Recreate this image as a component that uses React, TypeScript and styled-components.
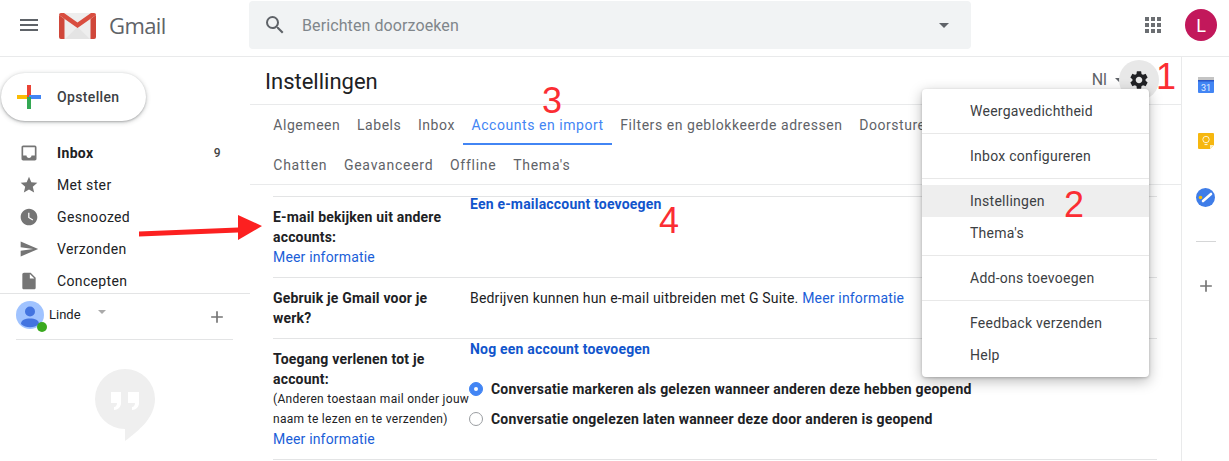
import React from "react";
import styled, { createGlobalStyle } from "styled-components";
import { MdAdd, MdInbox, MdInsertDriveFile, MdMenu, MdSearch, MdSend, MdSettings, MdStar, MdWatchLater } from "react-icons/md";

const Global = createGlobalStyle`
  html, body { margin: 0; padding: 0; background: #fff; }
  body { font-family: Roboto, "Liberation Sans", sans-serif; font-size: 14px; color: #202124; }
  * { box-sizing: border-box; }
`;

const Page = styled.div`
  position: relative;
  width: 1229px;
  height: 461px;
  overflow: hidden;
  display: flex;
  flex-direction: column;
`;

const Header = styled.header`
  height: 57px;
  flex: none;
  display: flex;
  align-items: flex-start;
  border-bottom: 1px solid #e9eaeb;
`;
const MenuBtn = styled.div`
  width: 59px;
  height: 50px;
  flex: none;
  padding-left: 17px;
  display: flex;
  align-items: center;
  color: #5f6368;
  font-size: 24px;
`;
const Brand = styled.div`
  width: 190px;
  height: 50px;
  flex: none;
  display: flex;
  align-items: center;
  gap: 13px;
`;
const BrandName = styled.span`
  font-family: "Open Sans", sans-serif;
  font-size: 22px;
  letter-spacing: -0.6px;
  color: #5f6368;
`;
const Search = styled.div`
  width: 722px;
  height: 48px;
  margin-top: 1px;
  flex: none;
  background: #f1f3f4;
  border-radius: 4px;
  display: flex;
  align-items: center;
  padding: 0 22px 0 14px;
  color: #5f6368;
  font-size: 24px;
`;
const Placeholder = styled.span`
  flex: 1;
  margin-left: 15px;
  font-size: 16px;
  letter-spacing: 0.1px;
  color: #80868b;
`;
const Caret = styled.i<{ $c?: string; $s?: number }>`
  display: inline-block;
  flex: none;
  width: 0;
  height: 0;
  border-left: ${(p) => p.$s ?? 5}px solid transparent;
  border-right: ${(p) => p.$s ?? 5}px solid transparent;
  border-top: ${(p) => p.$s ?? 5}px solid ${(p) => p.$c ?? "#5f6368"};
`;
const HeaderRight = styled.div`
  flex: 1;
  height: 50px;
  display: flex;
  align-items: center;
  justify-content: flex-end;
  gap: 24px;
  padding-right: 12px;
`;
const Avatar = styled.div`
  width: 32px;
  height: 32px;
  border-radius: 50%;
  background: #c2185b;
  color: #fff;
  font-size: 18px;
  display: flex;
  align-items: center;
  justify-content: center;
`;

const Body = styled.div`
  flex: 1;
  min-height: 0;
  display: flex;
`;
const Sidebar = styled.aside`
  width: 250px;
  flex: none;
  display: flex;
  flex-direction: column;
`;
const Compose = styled.div`
  width: 145px;
  height: 48px;
  margin: 16px 0 16px 1px;
  flex: none;
  border-radius: 24px;
  background: #fff;
  box-shadow: 0 1px 2px rgba(60, 64, 67, 0.3), 0 1px 4px 1px rgba(60, 64, 67, 0.2);
  display: flex;
  align-items: center;
  gap: 16px;
  padding-left: 16px;
  font-weight: 500;
  letter-spacing: 0.35px;
  color: #3c4043;
`;
const Nav = styled.nav`
  height: 157px;
  flex: none;
  overflow: hidden;
  border-bottom: 1px solid #e3e4e5;
`;
const NavRow = styled.div<{ $bold?: boolean }>`
  height: 32px;
  display: flex;
  align-items: center;
  padding: 0 29px 0 19px;
  gap: 18px;
  font-weight: ${(p) => (p.$bold ? 700 : 400)};
  letter-spacing: 0.35px;
  color: #202124;
  svg { color: #757575; font-size: 20px; flex: none; }
`;
const NavLabel = styled.span`
  flex: 1;
`;
const Count = styled.span`
  font-size: 12px;
  font-weight: 500;
  color: #444;
`;
const Account = styled.div`
  height: 46px;
  margin: 0 16px;
  flex: none;
  width: 217px;
  border-bottom: 1px solid #e3e4e5;
  display: flex;
  align-items: flex-start;
  padding-top: 7px;
`;
const AccountName = styled.span`
  margin: 6px 0 0 1px;
  font-size: 13px;
  width: 49px;
  color: #202124;
`;
const AccountCaret = styled.div`
  margin-top: 4px;
  flex: 1;
  display: flex;
  height: 14px;
  align-items: center;
`;
const AccountPlus = styled.div`
  margin: 6px 6px 0 0;
  font-size: 20px;
  color: #757575;
  display: flex;
`;
const HangoutWrap = styled.div`
  margin: 28px 0 0 94px;
`;

const Main = styled.main`
  width: 931px;
  flex: none;
  min-width: 0;
`;
const TitleBar = styled.div`
  height: 48px;
  display: flex;
  align-items: center;
  justify-content: space-between;
  border-bottom: 1px solid #e9eaeb;
  padding: 0 22px 2px 15px;
`;
const Title = styled.h1`
  margin: 4px 0 0;
  font-size: 22px;
  font-weight: 400;
  color: #202124;
`;
const TitleTools = styled.div`
  display: flex;
  align-items: center;
  color: #5f6368;
  font-size: 16px;
`;
const GearCircle = styled.div`
  width: 40px;
  height: 40px;
  margin-left: -4px;
  border-radius: 50%;
  background: #e8e8e8;
  display: flex;
  align-items: center;
  justify-content: center;
  color: #202124;
  font-size: 22px;
`;
const LangLabel = styled.span`
  margin-right: 8px;
`;
const TabRow = styled.div<{ $line?: boolean }>`
  height: 40px;
  padding-left: 15px;
  display: flex;
  overflow: hidden;
  white-space: nowrap;
  letter-spacing: ${(p) => (p.$line ? "0.75px" : "0.55px")};
  ${(p) => (p.$line ? "border-bottom: 1px solid #e9eaeb;" : "")}
`;
const Tab = styled.div<{ $active?: boolean }>`
  height: 40px;
  padding: 2px 8.300px 0;
  display: flex;
  align-items: center;
  color: ${(p) => (p.$active ? "#4285f4" : "#5f6368")};
  font-weight: 400;
  border-bottom: 2px solid ${(p) => (p.$active ? "#4285f4" : "transparent")};
`;
const Settings = styled.div`
  margin: 11px 24px 0 23px;
  border-bottom: 1px solid #e3e4e5;
`;
const SetRow = styled.section`
  display: grid;
  grid-template-columns: 197px 1fr;
  border-top: 1px solid #e3e4e5;
  height: ${(p: { $h: number }) => p.$h}px;
`;
const Label = styled.div`
  padding-top: 10px;
  line-height: 20px;
  letter-spacing: 0.18px;
`;
const LabelTitle = styled.div`
  font-weight: 700;
  color: #202124;
  padding-right: 12px;
`;
const Note = styled.div`
  font-size: 12px;
  letter-spacing: 0.3px;
  white-space: nowrap;
`;
const Link = styled.a`
  display: block;
  color: #1a5ed8;
  letter-spacing: 0.17px;
`;
const StrongLink = styled.a<{ $tight?: boolean }>`
  display: block;
  font-weight: 700;
  color: #1155cc;
  letter-spacing: 0.19px;
  line-height: ${(p) => (p.$tight ? "14px" : "20px")};
`;
const Value = styled.div<{ $top: number }>`
  padding-top: ${(p) => p.$top}px;
  line-height: 20px;
  letter-spacing: 0.18px;
  white-space: nowrap;
  color: #202124;
`;
const InlineLink = styled.a`
  color: #1a5ed8;
`;
const Radios = styled.div`
  margin-top: 15px;
`;
const RadioRow = styled.div`
  height: 30px;
  margin-left: -1px;
  display: flex;
  align-items: center;
  gap: 8px;
  font-weight: 700;
  letter-spacing: 0.2px;
`;
const Radio = styled.span<{ $on?: boolean }>`
  width: 14px;
  height: 14px;
  border-radius: 50%;
  flex: none;
  display: flex;
  align-items: center;
  justify-content: center;
  background: ${(p) => (p.$on ? "#4285f4" : "#fff")};
  border: 1px solid ${(p) => (p.$on ? "#4285f4" : "#9a9da1")};
  &::after {
    content: "";
    width: 4px;
    height: 4px;
    border-radius: 50%;
    background: ${(p) => (p.$on ? "#fff" : "transparent")};
  }
`;

const Rail = styled.aside`
  flex: 1;
  border-left: 1px solid #e9eaeb;
  display: flex;
  flex-direction: column;
  align-items: center;
  padding: 18px 0 0 0;
  color: #757575;
`;
const RailIcon = styled.div<{ $gap: number }>`
  height: 20px;
  display: flex;
  align-items: center;
  justify-content: center;
  margin-bottom: ${(p) => p.$gap}px;
`;
const RailRule = styled.div`
  width: 20px;
  height: 1px;
  background: #d5d6d7;
  margin-bottom: 34px;
`;

const Dropdown = styled.div`
  position: absolute;
  left: 922px;
  top: 89px;
  width: 227px;
  height: 288px;
  padding-top: 6px;
  background: #fff;
  border-radius: 4px;
  box-shadow: 0 4px 14px rgba(0, 0, 0, 0.28), 0 1px 3px rgba(0, 0, 0, 0.2);
  letter-spacing: 0.26px;
  color: #3c4043;
`;
const DropItem = styled.div<{ $hl?: boolean }>`
  height: 32px;
  padding-left: 48px;
  display: flex;
  align-items: center;
  background: ${(p) => (p.$hl ? "#eeeeee" : "transparent")};
`;
const DropRule = styled.div<{ $after: number }>`
  height: 1px;
  margin: 6px 0 ${(p) => p.$after}px;
  background: #e8e8e8;
`;

const Mark = styled.span<{ $x: number; $y: number }>`
  position: absolute;
  left: ${(p) => p.$x}px;
  top: ${(p) => p.$y}px;
  font-family: "Liberation Sans", Arial, sans-serif;
  font-size: 36px;
  line-height: 36px;
  color: #fb2d33;
`;
const ArrowLayer = styled.svg`
  position: absolute;
  left: 130px;
  top: 205px;
`;

const GmailLogo = () => (
  <svg width="37" height="27" viewBox="0 0 37 27">
    <path d="M2 1h33a2 2 0 0 1 2 2v22a2 2 0 0 1-2 2H2a2 2 0 0 1-2-2V3a2 2 0 0 1 2-2z" fill="#eeeeee" />
    <path d="M6 27 18.500 15 31 27z" fill="#e4e4e4" />
    <path d="M5 1 18.500 10.500 32 1h3a2 2 0 0 1 2 2L18.500 16 0 3a2 2 0 0 1 2-2z" fill="#d94e40" />
    <path d="M0 3v22a2 2 0 0 0 2 2h3.500V6.900zM37 3v22a2 2 0 0 1-2 2h-3.500V6.900z" fill="#d0473a" />
  </svg>
);
const AppsIcon = () => (
  <svg width="16" height="16" viewBox="0 0 16 16" fill="#6b6e72">
    {[0, 6, 12].flatMap((y) => [0, 6, 12].map((x) => <rect key={`${x}-${y}`} x={x} y={y} width="4" height="4" />))}
  </svg>
);
const ColorPlus = () => (
  <svg width="24" height="24" viewBox="0 0 24 24">
    <rect x="10" y="0" width="4" height="12" fill="#ea4335" />
    <rect x="12" y="10" width="12" height="4" fill="#4285f4" />
    <rect x="10" y="12" width="4" height="12" fill="#34a853" />
    <rect x="0" y="10" width="10" height="4" fill="#fbbc04" />
  </svg>
);
const UserBadge = () => (
  <svg width="32" height="32" viewBox="0 0 32 32">
    <circle cx="14" cy="14" r="14" fill="#a0c3ff" />
    <circle cx="14" cy="10.500" r="5" fill="#4374e0" />
    <path d="M5 23c0-4 4-5.500 9-5.500s9 1.500 9 5.500a14 14 0 0 1-18 0z" fill="#4374e0" />
    <circle cx="26" cy="26" r="5" fill="#3aa91f" />
  </svg>
);
const HangoutBubble = () => (
  <svg width="62" height="74" viewBox="0 0 62 74">
    <path d="M31 1a30 30 0 0 1 30 30c0 18-15 31-30 42V61A30 30 0 0 1 31 1z" fill="#efefef" />
    <path d="M17 24h10v11c0 4-3 7-7 7v-3c2 0 3-2 3-4h-6zM34 24h11v11c0 4-3 7-7 7v-3c2 0 3-2 3-4h-7z" fill="#fff" />
  </svg>
);
const CalendarIcon = () => (
  <svg width="16" height="16" viewBox="0 0 16 16">
    <rect x="0" y="0" width="16" height="16" rx="1" fill="#4285f4" />
    <rect x="0" y="0" width="16" height="3" fill="#c4c4c4" />
    <rect x="0" y="3" width="16" height="1.500" fill="#2a56c6" />
    <text x="8" y="14" textAnchor="middle" fontSize="9" fill="#e8f0fe" fontFamily="Roboto, sans-serif">31</text>
  </svg>
);
const KeepIcon = () => (
  <svg width="16" height="16" viewBox="0 0 16 16">
    <path d="M1 0h14a1 1 0 0 1 1 1v11l-4 4H1a1 1 0 0 1-1-1V1a1 1 0 0 1 1-1z" fill="#f6b70f" />
    <path d="M16 12h-4v4z" fill="#fdf0c4" />
    <circle cx="8" cy="6.500" r="3.200" fill="none" stroke="#fff3cf" strokeWidth="1" />
    <path d="M6.500 11.500h3" stroke="#fff3cf" strokeWidth="1.200" />
  </svg>
);
const TasksIcon = () => (
  <svg width="19" height="19" viewBox="0 0 19 19">
    <circle cx="9.500" cy="9.500" r="9.500" fill="#3f7de8" />
    <path d="M7 13 15 6" stroke="#fff" strokeWidth="2.600" strokeLinecap="round" />
    <circle cx="4.500" cy="9.500" r="1.800" fill="#fbbc04" />
  </svg>
);

const navItems = [
  { Icon: MdInbox, label: "Inbox", bold: true, count: "9" },
  { Icon: MdStar, label: "Met ster" },
  { Icon: MdWatchLater, label: "Gesnoozed" },
  { Icon: MdSend, label: "Verzonden" },
  { Icon: MdInsertDriveFile, label: "Concepten" },
];
const tabsOne = ["Algemeen", "Labels", "Inbox", "Accounts en import", "Filters en geblokkeerde adressen", "Doorsturen en POP/IMAP", "Add-ons"];
const tabsTwo = ["Chatten", "Geavanceerd", "Offline", "Thema's"];

export default function App() {
  return (
    <Page>
      <Global />
      <Header>
        <MenuBtn><MdMenu /></MenuBtn>
        <Brand><GmailLogo /><BrandName>Gmail</BrandName></Brand>
        <Search>
          <MdSearch />
          <Placeholder>Berichten doorzoeken</Placeholder>
          <Caret />
        </Search>
        <HeaderRight>
          <AppsIcon />
          <Avatar>L</Avatar>
        </HeaderRight>
      </Header>
      <Body>
        <Sidebar>
          <Compose><ColorPlus />Opstellen</Compose>
          <Nav>
            {navItems.map(({ Icon, label, bold, count }) => (
              <NavRow key={label} $bold={bold}>
                <Icon />
                <NavLabel>{label}</NavLabel>
                {count && <Count>{count}</Count>}
              </NavRow>
            ))}
          </Nav>
          <Account>
            <UserBadge />
            <AccountName>Linde</AccountName>
            <AccountCaret><Caret $c="#aaa" $s={4} /></AccountCaret>
            <AccountPlus><MdAdd /></AccountPlus>
          </Account>
          <HangoutWrap><HangoutBubble /></HangoutWrap>
        </Sidebar>
        <Main>
          <TitleBar>
            <Title>Instellingen</Title>
            <TitleTools>
              <LangLabel>Nl</LangLabel>
              <Caret $s={4} />
              <GearCircle><MdSettings /></GearCircle>
            </TitleTools>
          </TitleBar>
          <TabRow>
            {tabsOne.map((t) => <Tab key={t} $active={t === "Accounts en import"}>{t}</Tab>)}
          </TabRow>
          <TabRow $line>
            {tabsTwo.map((t) => <Tab key={t}>{t}</Tab>)}
          </TabRow>
          <Settings>
            <SetRow $h={81}>
              <Label>
                <LabelTitle>E-mail bekijken uit andere accounts:</LabelTitle>
                <Link>Meer informatie</Link>
              </Label>
              <Value $top={0}><StrongLink $tight>Een e-mailaccount toevoegen</StrongLink></Value>
            </SetRow>
            <SetRow $h={61}>
              <Label><LabelTitle>Gebruik je Gmail voor je werk?</LabelTitle></Label>
              <Value $top={10}>Bedrijven kunnen hun e-mail uitbreiden met G Suite. <InlineLink>Meer informatie</InlineLink></Value>
            </SetRow>
            <SetRow $h={121}>
              <Label>
                <LabelTitle>Toegang verlenen tot je account:</LabelTitle>
                <Note>(Anderen toestaan mail onder jouw<br />naam te lezen en te verzenden)</Note>
                <Link>Meer informatie</Link>
              </Label>
              <Value $top={0}>
                <StrongLink>Nog een account toevoegen</StrongLink>
                <Radios>
                  <RadioRow><Radio $on />Conversatie markeren als gelezen wanneer anderen deze hebben geopend</RadioRow>
                  <RadioRow><Radio />Conversatie ongelezen laten wanneer deze door anderen is geopend</RadioRow>
                </Radios>
              </Value>
            </SetRow>
          </Settings>
        </Main>
        <Rail>
          <RailIcon $gap={36}><CalendarIcon /></RailIcon>
          <RailIcon $gap={36}><KeepIcon /></RailIcon>
          <RailIcon $gap={34}><TasksIcon /></RailIcon>
          <RailRule />
          <RailIcon $gap={0}><MdAdd size={20} /></RailIcon>
        </Rail>
      </Body>
      <Dropdown>
        <DropItem>Weergavedichtheid</DropItem>
        <DropRule $after={6} />
        <DropItem>Inbox configureren</DropItem>
        <DropRule $after={6} />
        <DropItem $hl>Instellingen</DropItem>
        <DropItem>Thema's</DropItem>
        <DropRule $after={6} />
        <DropItem>Add-ons toevoegen</DropItem>
        <DropRule $after={6} />
        <DropItem>Feedback verzenden</DropItem>
        <DropItem>Help</DropItem>
      </Dropdown>
      <Mark $x={1156} $y={59}>1</Mark>
      <Mark $x={1064} $y={187}>2</Mark>
      <Mark $x={542} $y={83}>3</Mark>
      <Mark $x={659} $y={203}>4</Mark>
      <ArrowLayer width="140" height="40" viewBox="0 0 140 40">
        <path d="M9 26.500 108 22.500V10l24 11-24 14V27.500L9 31.500z" fill="#fc2020" />
      </ArrowLayer>
    </Page>
  );
}
